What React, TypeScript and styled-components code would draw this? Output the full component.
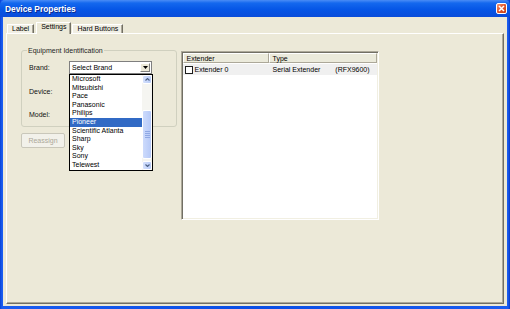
import React from 'react';
import styled, { createGlobalStyle } from 'styled-components';

const GlobalStyle = createGlobalStyle`
  html, body {
    margin: 0;
    padding: 0;
  }
  body {
    font-family: "Liberation Sans", Arial, sans-serif;
    font-size: 7px;
    color: #000;
  }
  * {
    box-sizing: border-box;
  }
`;

const brands = [
  'Microsoft',
  'Mitsubishi',
  'Pace',
  'Panasonic',
  'Philips',
  'Pioneer',
  'Scientific Atlanta',
  'Sharp',
  'Sky',
  'Sony',
  'Telewest',
];

const Window = styled.div`
  width: 510px;
  height: 309px;
  display: flex;
  flex-direction: column;
  background: linear-gradient(90deg, #0842d6 0, #1a5cf0 2px, #0a4ee4 50%, #1a5cf0 calc(100% - 2px), #0638c4 100%);
`;

const TitleBar = styled.div`
  height: 17px;
  display: flex;
  align-items: center;
  justify-content: space-between;
  padding: 0 3px 0 5px;
  background: linear-gradient(180deg, #4a8cf6 0%, #1468ee 18%, #0656e6 55%, #0a4cda 100%);
  border-radius: 5px 5px 0 0;
`;

const Title = styled.span`
  font-weight: bold;
  font-size: 8.4px;
  color: #fff;
  text-shadow: 1px 1px 0 #0b2a8c;
`;

const CloseButton = styled.div`
  width: 11px;
  height: 11px;
  border: 1px solid #fff;
  border-radius: 2px;
  background: linear-gradient(135deg, #f29676 0%, #e25a30 45%, #c23c14 100%);
  display: flex;
  align-items: center;
  justify-content: center;
`;

const Body = styled.div`
  flex: 1;
  margin: 0 3px 3px;
  padding: 5px 3px 2px;
  background: #ece9d8;
  display: flex;
  flex-direction: column;
`;

const TabStrip = styled.div`
  height: 11px;
  display: flex;
  align-items: flex-end;
  gap: 1px;
  padding-left: 1px;
`;

const Tab = styled.div<{ $active?: boolean }>`
  position: relative;
  z-index: ${p => (p.$active ? 1 : 0)};
  height: ${p => (p.$active ? 12 : 9)}px;
  margin: ${p => (p.$active ? '0 0 -1px 1px' : '0')};
  padding: 0 4px ${p => (p.$active ? 3 : 0)}px;
  line-height: 8px;
  background: ${p => (p.$active ? '#ece9d8' : '#f1efe4')};
  border-top: 1px solid #fff;
  border-left: 1px solid #fff;
  border-right: 1px solid #716f64;
  box-shadow: inset -1px 0 0 #aca899;
  white-space: nowrap;
`;

const Panel = styled.div`
  flex: 1;
  display: flex;
  align-items: flex-start;
  gap: 4px;
  padding: 12px 14px;
  border-top: 1px solid #fff;
  border-left: 1px solid #fff;
  border-right: 1px solid #716f64;
  border-bottom: 1px solid #716f64;
  box-shadow: inset -1px -1px 0 #aca899;
`;

const LeftColumn = styled.div`
  width: 155.5px;
  display: flex;
  flex-direction: column;
  align-items: flex-start;
  gap: 6px;
`;

const GroupBox = styled.fieldset`
  width: 100%;
  margin: 0;
  padding: 6px 5px 5px 7px;
  border: 1px solid #d0d0bf;
  border-radius: 3px;
`;

const GroupTitle = styled.legend`
  margin-left: -2px;
  padding: 0 1px;
  line-height: 9px;
  color: #1e1e1e;
`;

const FieldGrid = styled.div`
  display: grid;
  grid-template-columns: 40px 83px;
  grid-auto-rows: 13px;
  row-gap: 10.5px;
  align-items: center;
`;

const FieldLabel = styled.span`
  color: #111;
`;

const ComboWrap = styled.div`
  position: relative;
  width: 83px;
  height: 13px;
`;

const ComboField = styled.div`
  height: 100%;
  display: flex;
  align-items: center;
  background: #fff;
  border: 1px solid #7f7f7f;
  padding: 1px 1px 1px 2px;
`;

const ComboText = styled.span`
  flex: 1;
`;

const ComboArrow = styled.div`
  width: 10px;
  height: 100%;
  background: #ece9d8;
  border-top: 1px solid #fff;
  border-left: 1px solid #fff;
  border-right: 1px solid #808080;
  border-bottom: 1px solid #808080;
  display: flex;
  align-items: center;
  justify-content: center;
`;

const DropList = styled.div`
  position: absolute;
  top: 100%;
  left: 0;
  z-index: 5;
  width: 84px;
  height: 97px;
  border: 1px solid #000;
  background: #fff;
  display: flex;
`;

const Items = styled.div`
  flex: 1;
  display: flex;
  flex-direction: column;
`;

const Item = styled.div<{ $selected?: boolean }>`
  height: 8.6px;
  line-height: 8.6px;
  padding-left: 2px;
  white-space: nowrap;
  background: ${p => (p.$selected ? '#316ac5' : 'transparent')};
  color: ${p => (p.$selected ? '#fff' : '#000')};
`;

const ScrollBar = styled.div`
  width: 10px;
  display: flex;
  flex-direction: column;
  background: #f5f5f1;
`;

const ScrollButton = styled.div`
  height: 9px;
  background: linear-gradient(90deg, #d4e0fc, #b9ccf8);
  border: 1px solid #fff;
  border-radius: 2px;
  display: flex;
  align-items: center;
  justify-content: center;
`;

const ScrollTrack = styled.div`
  flex: 1;
  padding-top: 26px;
`;

const ScrollThumb = styled.div`
  height: 49px;
  background: linear-gradient(90deg, #cddbfc, #b6c9f7);
  border: 1px solid #fff;
  border-radius: 2px;
  display: flex;
  flex-direction: column;
  align-items: center;
  justify-content: center;
  gap: 1px;
`;

const Grip = styled.div`
  width: 5px;
  height: 1px;
  background: #8fa8e4;
`;

const PushButton = styled.div`
  width: 44px;
  height: 15px;
  display: flex;
  align-items: center;
  justify-content: center;
  color: #aca899;
  border: 1px solid #c9c7ba;
  border-radius: 2px;
  background: #f2f1ea;
`;

const ListView = styled.div`
  width: 198px;
  height: 169px;
  margin-top: 5px;
  background: #fff;
  border-top: 1px solid #aca899;
  border-left: 1px solid #aca899;
  border-right: 1px solid #fff;
  border-bottom: 1px solid #fff;
  box-shadow: inset 1px 1px 0 #716f64, inset -1px -1px 0 #f1efe2;
  padding: 1px;
  display: flex;
  flex-direction: column;
`;

const HeaderRow = styled.div`
  height: 10px;
  display: flex;
  background: #ebeadb;
`;

const HeaderCell = styled.div<{ $width?: number }>`
  width: ${p => (p.$width ? `${p.$width}px` : 'auto')};
  flex: ${p => (p.$width ? 'none' : 1)};
  padding-left: 3px;
  line-height: 9px;
  border-right: 1px solid #aca899;
  border-bottom: 1px solid #aca899;
  border-top: 1px solid #fff;
  border-left: 1px solid #fff;
`;

const Row = styled.div`
  height: 11px;
  margin-top: 1px;
  display: flex;
  align-items: center;
  background: #f0f0f0;
`;

const Cell = styled.div<{ $width?: number }>`
  width: ${p => (p.$width ? `${p.$width}px` : 'auto')};
  flex: ${p => (p.$width ? 'none' : 1)};
  display: flex;
  align-items: center;
  gap: 2px;
  padding-left: ${p => (p.$width ? 2 : 4)}px;
  white-space: nowrap;
`;

const CheckBox = styled.span`
  width: 8px;
  height: 8px;
  border: 1px solid #1c1c1c;
  background: #fff;
`;

const Model = styled.span`
  margin-left: 13px;
`;

const Chevron = ({ up }: { up?: boolean }) => (
  <svg width="5" height="3" viewBox="0 0 5 3">
    <path d={up ? 'M0.5 2.5 L2.5 0.5 L4.5 2.5' : 'M0.5 0.5 L2.5 2.5 L4.5 0.5'} fill="none" stroke="#4d6185" strokeWidth="1.1" />
  </svg>
);

export default function App() {
  return (
    <>
      <GlobalStyle />
      <Window>
        <TitleBar>
          <Title>Device Properties</Title>
          <CloseButton>
            <svg width="7" height="7" viewBox="0 0 7 7">
              <path d="M1 1 L6 6 M6 1 L1 6" stroke="#fff" strokeWidth="1.5" />
            </svg>
          </CloseButton>
        </TitleBar>
        <Body>
          <TabStrip>
            <Tab>Label</Tab>
            <Tab $active>Settings</Tab>
            <Tab>Hard Buttons</Tab>
          </TabStrip>
          <Panel>
            <LeftColumn>
              <GroupBox>
                <GroupTitle>Equipment Identification</GroupTitle>
                <FieldGrid>
                  <FieldLabel>Brand:</FieldLabel>
                  <ComboWrap>
                    <ComboField>
                      <ComboText>Select Brand</ComboText>
                      <ComboArrow>
                        <svg width="5" height="3" viewBox="0 0 5 3">
                          <path d="M0 0 H5 L2.5 3 Z" fill="#000" />
                        </svg>
                      </ComboArrow>
                    </ComboField>
                    <DropList>
                      <Items>
                        {brands.map(b => (
                          <Item key={b} $selected={b === 'Pioneer'}>{b}</Item>
                        ))}
                      </Items>
                      <ScrollBar>
                        <ScrollButton><Chevron up /></ScrollButton>
                        <ScrollTrack>
                          <ScrollThumb>
                            <Grip />
                            <Grip />
                            <Grip />
                            <Grip />
                          </ScrollThumb>
                        </ScrollTrack>
                        <ScrollButton><Chevron /></ScrollButton>
                      </ScrollBar>
                    </DropList>
                  </ComboWrap>
                  <FieldLabel>Device:</FieldLabel>
                  <span />
                  <FieldLabel>Model:</FieldLabel>
                  <span />
                </FieldGrid>
              </GroupBox>
              <PushButton>Reassign</PushButton>
            </LeftColumn>
            <ListView>
              <HeaderRow>
                <HeaderCell $width={86}>Extender</HeaderCell>
                <HeaderCell>Type</HeaderCell>
              </HeaderRow>
              <Row>
                <Cell $width={86}>
                  <CheckBox />
                  Extender 0
                </Cell>
                <Cell>
                  Serial Extender
                  <Model>(RFX9600)</Model>
                </Cell>
              </Row>
            </ListView>
          </Panel>
        </Body>
      </Window>
    </>
  );
}
